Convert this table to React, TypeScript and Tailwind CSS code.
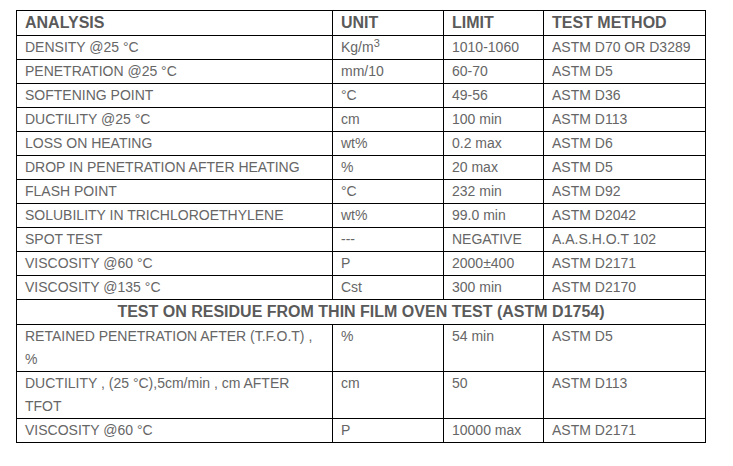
const rows: [React.ReactNode, React.ReactNode, string, string][] = [
  ['DENSITY @25 °C', <>Kg/m<sup className="text-[11px] leading-none">3</sup></>, '1010-1060', 'ASTM D70 OR D3289'],
  ['PENETRATION @25 °C', 'mm/10', '60-70', 'ASTM D5'],
  ['SOFTENING POINT', '°C', '49-56', 'ASTM D36'],
  ['DUCTILITY @25 °C', 'cm', '100 min', 'ASTM D113'],
  ['LOSS ON HEATING', 'wt%', '0.2 max', 'ASTM D6'],
  ['DROP IN PENETRATION AFTER HEATING', '%', '20 max', 'ASTM D5'],
  ['FLASH POINT', '°C', '232 min', 'ASTM D92'],
  ['SOLUBILITY IN TRICHLOROETHYLENE', 'wt%', '99.0 min', 'ASTM D2042'],
  ['SPOT TEST', '---', 'NEGATIVE', 'A.A.S.H.O.T 102'],
  ['VISCOSITY @60 °C', 'P', '2000±400', 'ASTM D2171'],
  ['VISCOSITY @135 °C', 'Cst', '300 min', 'ASTM D2170'],
];

const residue: [string, string, string, string][] = [
  ['RETAINED PENETRATION AFTER (T.F.O.T) , %', '%', '54 min', 'ASTM D5'],
  ['DUCTILITY , (25 °C),5cm/min , cm AFTER TFOT', 'cm', '50', 'ASTM D113'],
  ['VISCOSITY @60 °C', 'P', '10000 max', 'ASTM D2171'],
];

const td = 'border border-black px-2 py-0 align-top leading-[23px] text-[14px] text-[#666]';
const th = 'border border-black px-2 py-0 text-left leading-[24px] text-[16px] font-bold text-[#5a5a5a]';

export default function App() {
  return (
    <div className="min-h-screen bg-white pl-4 pt-[10px]" style={{ fontFamily: '"Liberation Sans", Arial, sans-serif' }}>
      <table className="w-[689px] table-fixed border-collapse">
        <colgroup>
          <col className="w-[316px]" />
          <col className="w-[111px]" />
          <col className="w-[100px]" />
          <col className="w-[162px]" />
        </colgroup>
        <thead>
          <tr>
            <th className={th}>ANALYSIS</th>
            <th className={th}>UNIT</th>
            <th className={th}>LIMIT</th>
            <th className={th}>TEST METHOD</th>
          </tr>
        </thead>
        <tbody>
          {rows.map((r, i) => (
            <tr key={i}>
              {r.map((c, j) => (
                <td key={j} className={td}>{c}</td>
              ))}
            </tr>
          ))}
          <tr>
            <td colSpan={4} className="border border-black px-2 py-0 text-center leading-[24px] text-[16px] font-bold text-[#5a5a5a]">
              TEST ON RESIDUE FROM THIN FILM OVEN TEST (ASTM D1754)
            </td>
          </tr>
          {residue.map((r, i) => (
            <tr key={i}>
              {r.map((c, j) => (
                <td key={j} className={td}>{c}</td>
              ))}
            </tr>
          ))}
        </tbody>
      </table>
    </div>
  );
}
